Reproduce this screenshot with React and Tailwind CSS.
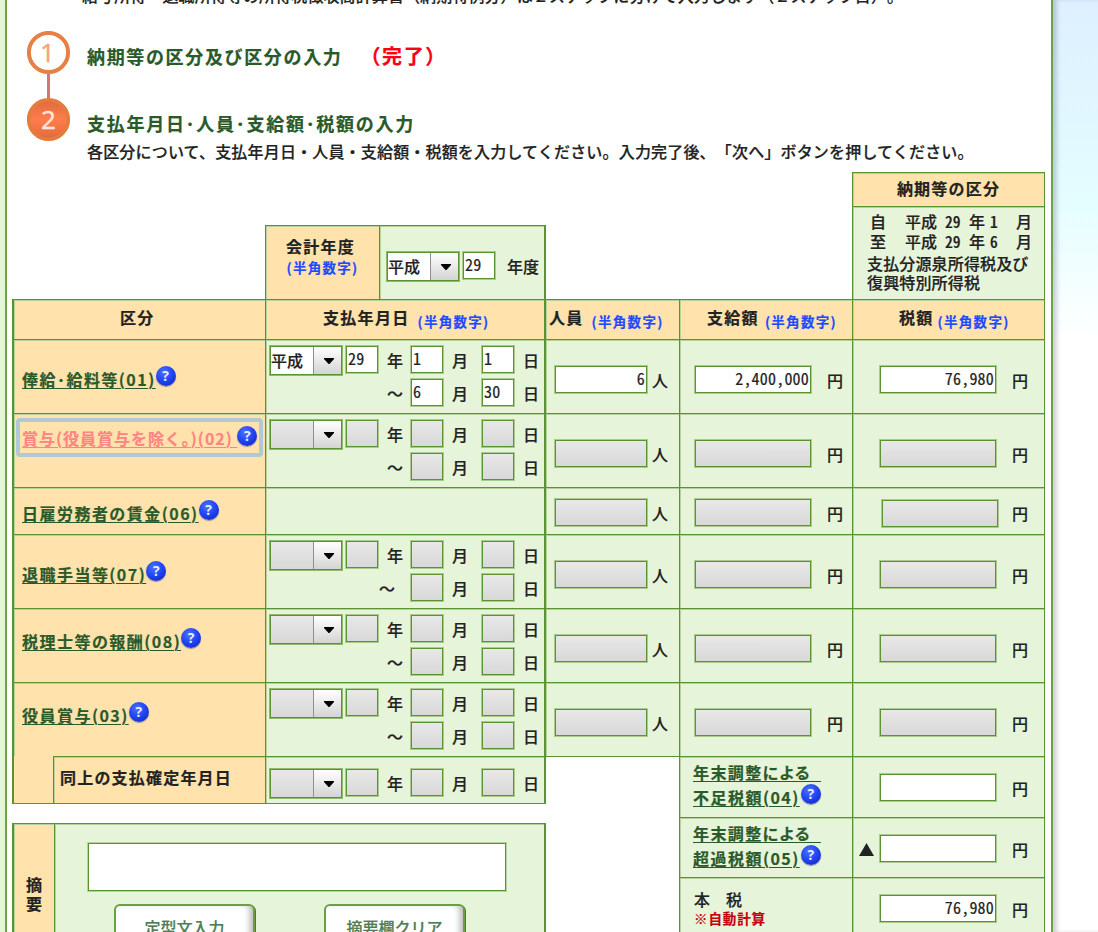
import React from "react";

const LINE = "border-[#5b9332]";
const JP = "font-['Noto_Sans_CJK_JP',sans-serif] [text-spacing-trim:space-all] [-webkit-text-stroke-width:0.2px]";

function Help({ className = "" }) {
  return (
    <span
      className={`inline-flex h-[20px] w-[20px] shrink-0 items-center justify-center rounded-full bg-[radial-gradient(circle_at_40%_32%,#4c72ff_0%,#2347f5_45%,#1630d0_75%,#0a1a96_100%)] font-['Open_Sans',sans-serif] text-[14px] leading-none font-bold text-[#e8ecff] shadow-[0_1px_1px_#8a8a9a] [-webkit-text-stroke-width:0] ${className}`}
    >
      ?
    </span>
  );
}

function Cell({ className = "", children }) {
  return (
    <div className={`shrink-0 border-t border-l shadow-[inset_1px_1px_0_#b4d29a] ${LINE} ${className}`}>{children}</div>
  );
}

function Field({ value = "", off = false, className = "" }) {
  return (
    <div
      className={`h-[27px] shrink-0 overflow-hidden border-[1.5px] border-[#5b9332] px-px text-[16px] leading-[23px] tracking-[0.2px] whitespace-pre [font-feature-settings:'hwid'] outline outline-[#a9cb8b] ${
        off ? "bg-linear-to-b from-[#e8e8e8] to-[#d8d8d8]" : "bg-white"
      } ${className}`}
    >
      {value}
    </div>
  );
}

function Era({ value = "", off = false }) {
  return (
    <div className={`flex h-[29px] w-[72px] shrink-0 border outline outline-[#8fba6c] ${LINE}`}>
      <div
        className={`w-[42px] text-[16px] leading-[27px] font-medium ${
          off ? "bg-linear-to-b from-[#e8e8e8] to-[#d8d8d8]" : "bg-white"
        }`}
      >
        {value}
      </div>
      <div className="flex flex-1 items-center justify-center border-l border-[#909090] bg-linear-to-b from-white to-[#d4d4d4]">
        <svg width="10" height="6" viewBox="0 0 10 6" className="ml-[2px]">
          <path d="M0 0H10V1L5.5 6H4.5L0 1Z" fill="#000" />
        </svg>
      </div>
    </div>
  );
}

function Unit({ children, className = "" }) {
  return <span className={`w-[16px] shrink-0 text-[16px] leading-[28px] font-medium ${className}`}>{children}</span>;
}

function MonthDay({ m, d, off }) {
  return (
    <>
      <Field value={m} off={off} className="ml-[8px] w-[32px]" />
      <Unit className="ml-[9px]">月</Unit>
      <Field value={d} off={off} className="ml-[14px] w-[32px]" />
      <Unit className="ml-[9px]">日</Unit>
    </>
  );
}

function Dates({ from = [], to, off = true, tilde = "" }) {
  return (
    <div className="pl-[4px]">
      <div className="flex h-[33px]">
        <Era value={from[0]} off={off} />
        <Field value={from[1]} off={off} className="ml-[4px] w-[32px]" />
        <Unit className="ml-[9px]">年</Unit>
        <MonthDay m={from[2]} d={from[3]} off={off} />
      </div>
      {to && (
        <div className="flex pl-[117px]">
          <Unit className={tilde}>～</Unit>
          <MonthDay m={to[0]} d={to[1]} off={off} />
        </div>
      )}
    </div>
  );
}

function Amount({ value, off, unit, field, gap, className = "" }) {
  return (
    <div className={`flex ${className}`}>
      <Field value={value} off={off} className={`text-right ${field}`} />
      <Unit className={gap}>{unit}</Unit>
    </div>
  );
}

function LinkText({ children, className = "tracking-[1.47px] text-[#2a5a2a]" }) {
  return (
    <span className={`text-[16px] leading-[20px] font-bold whitespace-pre underline underline-offset-[2px] decoration-1 ${className}`}>
      {children}
    </span>
  );
}

function HalfNum({ className = "" }) {
  return <span className={`text-[13.5px] font-bold tracking-[1.3px] text-[#1f4bff] ${className}`}>(半角数字)</span>;
}

const rows = [
  { label: "俸給･給料等(01)", h: "h-[74px]", lp: "pt-[29px]", off: false, from: ["平成", "29", "1", "1"], to: ["6", "30"], n: "6", pay: "2,400,000", tax: "76,980" },
  { label: "賞与(役員賞与を除く｡)(02) ", h: "h-[74px]", focus: true, off: true, from: [], to: [] },
  { label: "日雇労務者の賃金(06)", h: "h-[47px]", lp: "pt-[15px]", off: true, short: true },
  { label: "退職手当等(07)", h: "h-[74px]", lp: "pt-[29px]", off: true, from: [], to: [], tilde: "relative -left-[8px]" },
  { label: "税理士等の報酬(08)", h: "h-[74px]", lp: "pt-[22px]", off: true, from: [], to: [] },
  { label: "役員賞与(03)", h: "h-[74px]", lp: "pt-[22px]", off: true, from: [], to: [] },
];

function Row({ r }) {
  const pad = r.short ? "pt-[11px]" : "pt-[26px]";
  return (
    <div className={`ml-[5px] flex shrink-0 ${r.h}`}>
      <Cell className="w-[253px] border-l-2 bg-[#ffe2ac]">
        {r.focus ? (
          <div className="mt-[4px] ml-[2px] flex h-[39px] w-[247px] items-center rounded-[4px] border-4 border-[#b1c8d6] pl-[2px]">
            <LinkText className="tracking-[0.98px] text-[#ff8484]">{r.label}</LinkText>
            <Help className="-mt-[4px]" />
          </div>
        ) : (
          <div className={`flex pl-[8px] ${r.lp}`}>
            <LinkText>{r.label}</LinkText>
            <Help className="-mt-[3px]" />
          </div>
        )}
      </Cell>
      <Cell className="w-[279px] bg-[#e6f4da] pt-[6px]">
        {r.from && <Dates from={r.from} to={r.to} off={r.off} tilde={r.tilde} />}
      </Cell>
      <Cell className={`w-[135px] border-l-2 bg-[#e6f4da] ${pad}`}>
        <Amount value={r.n} off={r.off} unit="人" field="ml-[9px] w-[92px]" gap="ml-[5px]" />
      </Cell>
      <Cell className={`w-[173px] bg-[#e6f4da] ${pad}`}>
        <Amount value={r.pay} off={r.off} unit="円" field="ml-[15px] w-[116px]" gap="ml-[16px]" />
      </Cell>
      <Cell className={`w-[193px] border-r bg-[#e6f4da] ${pad}`}>
        <Amount value={r.tax} off={r.off} unit="円" field={r.short ? "mt-px ml-[29px] w-[116px]" : "ml-[27px] w-[116px]"} gap={r.short ? "ml-[14px]" : "ml-[16px]"} />
      </Cell>
    </div>
  );
}

function Period({ head, month }) {
  return (
    <div className="flex h-[20px] text-[16px] leading-[20px] font-medium">
      <span className="w-[35px]">{head}</span>
      <span className="w-[40px]">平成</span>
      <span className="w-[24px] text-[15.5px] [font-feature-settings:'hwid']">29</span>
      <span className="w-[21px]">年</span>
      <span className="w-[26px] text-[15.5px] [font-feature-settings:'hwid']">{month}</span>
      <span>月</span>
    </div>
  );
}

function Head({ title, className, half = "", titleClass = "" }) {
  return (
    <Cell className={`flex h-[40px] bg-[#ffe2ac] text-[16px] leading-[35px] font-bold tracking-[1.3px] whitespace-nowrap ${className}`}>
      <span className={titleClass}>{title}</span>
      {half && <HalfNum className={`pt-[4px] ${half}`} />}
    </Cell>
  );
}

function PushButton({ children, className }) {
  return (
    <div
      className={`h-[48px] w-[141px] rounded-[6px] border-2 border-[#6a9f42] bg-white pt-[7px] text-center text-[16px] leading-[28px] font-medium text-[#4f7d55] shadow-[inset_-6px_0_6px_-3px_#b5b5b5,1px_1px_0_#4d7a2e] ${className}`}
    >
      {children}
    </div>
  );
}

function Adjust({ first, second, triangle, className }) {
  return (
    <div className={`flex ${className}`}>
      <Cell className="w-[173px] bg-[#e6f4da] pt-[5px] pl-[13px]">
        <div className="flex h-[25px]">
          <LinkText className="tracking-[1.4px] text-[#2a5a2a] [font-feature-settings:'palt']">{first}</LinkText>
        </div>
        <div className="flex h-[26px]">
          <LinkText>{second}</LinkText>
          <Help className="-mt-[3px] ml-px" />
        </div>
      </Cell>
      <Cell className="flex w-[193px] border-r bg-[#e6f4da] pt-[17px]">
        <span className="w-[27px] shrink-0 pt-[8px] pl-[6px]">
          {triangle && (
            <svg width="15" height="13" viewBox="0 0 15 13"><path d="M7.5 0L15 13H0Z" fill="#222" /></svg>
          )}
        </span>
        <Amount unit="円" field="w-[116px]" gap="ml-[16px]" />
      </Cell>
    </div>
  );
}

export default function App() {
  return (
    <div className={`flex h-[932px] w-[1098px] overflow-hidden bg-[#e6f4da] text-[#222] ${JP}`}>
      <main className="ml-[5px] flex w-[1048px] shrink-0 flex-col border-x-2 border-[#6ea244] bg-white">
        <div className="h-[11px] shrink-0 pl-[75px] text-[16px] leading-[24px] font-medium tracking-[0.1px] whitespace-nowrap">
          <p className="-mt-[17px]">給与所得・退職所得等の所得税徴収高計算書（納期特例分）は２ステップに分けて入力します（２ステップ目）。</p>
        </div>
        <section className="flex h-[161px] shrink-0 pl-[20px]">
          <svg width="44" height="112" viewBox="0 0 44 112" className="mt-[20px] shrink-0">
            <defs>
              <linearGradient id="fill2" x1="0" y1="0" x2="0" y2="1">
                <stop offset="0" stopColor="#df6a3c" />
                <stop offset="0.5" stopColor="#ff7d4c" />
                <stop offset="1" stopColor="#df6a3c" />
              </linearGradient>
            </defs>
            <path d="M21.5 43V68" stroke="#d4777a" strokeWidth="3" />
            <circle cx="21.5" cy="21.5" r="19.6" fill="#fff" stroke="#e68044" strokeWidth="4" />
            <circle cx="21.5" cy="88.5" r="19.8" fill="url(#fill2)" stroke="#e47c40" strokeWidth="3.6" />
            <text x="20.5" y="31" textAnchor="middle" fontFamily="Noto Sans" fontSize="26" fill="#f9a47c" stroke="#f9a47c" strokeWidth="0.3">1</text>
            <text x="21.5" y="98" textAnchor="middle" fontFamily="Noto Sans" fontSize="26" fill="#ffe6da" stroke="#ffe6da" strokeWidth="0.3">2</text>
          </svg>
          <div className="pl-[16px] whitespace-nowrap">
            <h2 className="mt-[31px] flex h-[28px] text-[18px] leading-[28px] font-bold tracking-[1.65px] text-[#2a5a2a]">
              納期等の区分及び区分の入力
              <span className="ml-[18px] text-[20px] tracking-[1.6px] text-[#fb0012]">（完了）</span>
            </h2>
            <h2 className="mt-[39px] h-[28px] text-[18px] leading-[28px] font-bold tracking-[1.72px] text-[#2a5a2a]">
              支払年月日･人員･支給額･税額の入力
            </h2>
            <p className="text-[16px] leading-[28px] font-medium tracking-[0.18px]">
              各区分について、支払年月日・人員・支給額・税額を入力してください。入力完了後、「次へ」ボタンを押してください。
            </p>
          </div>
        </section>

        <div className="ml-[5px] flex h-[127px] shrink-0">
          <div className="mt-[53px] ml-[253px] flex h-[74px]">
            <Cell className="flex w-[114px] flex-col items-center bg-[#ffe2ac] pt-[8px] whitespace-nowrap">
              <span className="pr-[4px] text-[16px] leading-[24px] font-bold tracking-[1.3px]">会計年度</span>
              <HalfNum className="leading-[19px]" />
            </Cell>
            <Cell className="flex w-[167px] border-r-2 bg-[#e6f4da] pt-[26px] pl-[7px]">
              <Era value="平成" />
              <Field value="29" className="ml-[4px] w-[32px]" />
              <Unit className="ml-[12px] whitespace-nowrap">年度</Unit>
            </Cell>
          </div>
          <div className="ml-[306px] w-[193px]">
            <Cell className="h-[34px] w-[193px] border-r bg-[#ffe2ac] text-center text-[16px] leading-[30px] font-bold tracking-[1.2px]">
              納期等の区分
            </Cell>
            <Cell className="h-[93px] w-[193px] border-r bg-[#e6f4da] pt-[4px] pl-[17px]">
              <Period head="自" month="1" />
              <Period head="至" month="6" />
              <p className="-ml-[3px] pt-[3px] text-[16px] leading-[19px] font-medium tracking-[0.15px] whitespace-nowrap">
                支払分源泉所得税及び
                <br />
                復興特別所得税
              </p>
            </Cell>
          </div>
        </div>

        <div className="ml-[5px] flex h-[40px] shrink-0">
          <Head title="区分" className="w-[253px] border-l-2" titleClass="pl-[106px]" />
          <Head title="支払年月日" className="w-[279px]" titleClass="pl-[57px]" half="ml-[8px]" />
          <Head title="人員" className="w-[135px] border-l-2" titleClass="pl-[3px]" half="ml-[8px]" />
          <Head title="支給額" className="w-[173px]" titleClass="pl-[27px]" half="ml-[6px]" />
          <Head title="税額" className="w-[193px] border-r" titleClass="pl-[46px]" half="ml-[4px]" />
        </div>
        {rows.map((r) => (
          <Row key={r.label} r={r} />
        ))}

        <div className="ml-[5px] flex shrink-0">
          <div className="w-[534px]">
            <div className={`flex h-[48px] border-b ${LINE}`}>
              <div className={`w-[41px] border-l-2 bg-[#ffe2ac] ${LINE}`} />
              <Cell className="w-[212px] bg-[#ffe2ac] pl-[6px] text-[16px] leading-[41px] font-bold tracking-[1.2px]">
                同上の支払確定年月日
              </Cell>
              <Cell className="w-[281px] border-r-2 bg-[#e6f4da] pt-[12px]">
                <Dates />
              </Cell>
            </div>
            <div className="mt-[19px] flex h-[130px]">
              <Cell className="flex w-[42px] flex-col items-center border-l-2 bg-[#ffe2ac] pt-[51px] text-[16px] leading-[19px] font-bold">
                <span>摘</span>
                <span>要</span>
              </Cell>
              <Cell className="w-[492px] border-r-2 bg-[#e6f4da] pt-[19px] pl-[33px]">
                <div className={`h-[48px] w-[418px] border-[1.5px] bg-white outline outline-[#b4d29a] ${LINE}`} />
                <div className="flex pt-[13px] pl-[26px]">
                  <PushButton>定型文入力</PushButton>
                  <PushButton className="ml-[69px]">摘要欄クリア</PushButton>
                </div>
              </Cell>
            </div>
          </div>
          <div className={`w-[133px] border-t ${LINE}`} />
          <div>
            <Adjust first="年末調整による  " second="不足税額(04)" className="h-[61px]" />
            <Adjust first="年末調整による  " second="超過税額(05)" triangle className="h-[60px]" />
            <div className="flex h-[80px]">
              <Cell className="w-[173px] bg-[#e6f4da] pt-[10px] pl-[14px]">
                <div className="text-[16px] leading-[22px] font-medium">本　税</div>
                <div className="text-[13.5px] leading-[17px] font-bold tracking-[0.9px] text-[#c6000b]">※自動計算</div>
              </Cell>
              <Cell className="w-[193px] border-r bg-[#e6f4da] pt-[17px]">
                <Amount value="76,980" unit="円" field="ml-[27px] w-[116px]" gap="ml-[16px]" />
              </Cell>
            </div>
          </div>
        </div>
      </main>
      <div className="h-full flex-1 bg-[linear-gradient(to_bottom,#def0ff_0px,#e0f5ff_90px,#e4fdff_200px,#ffffff_340px)] shadow-[inset_5px_0_4px_-1px_rgba(90,90,120,0.28)]" />
    </div>
  );
}
